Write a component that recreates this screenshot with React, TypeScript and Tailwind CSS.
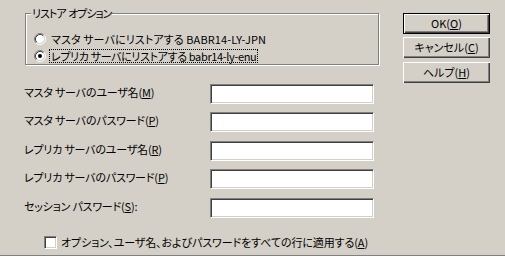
import type { ReactNode } from "react";

const sunken =
  "border border-t-[#808080] border-l-[#808080] border-r-white border-b-white shadow-[inset_1px_1px_0_#404040,inset_-1px_-1px_0_#d4d0c8] bg-white";

function Radio({ checked }: { checked?: boolean }) {
  return (
    <svg width="12" height="12" viewBox="0 0 12 12" className="shrink-0">
      <circle cx="6" cy="6" r="4.5" fill="#fff" />
      <path d="M2.11 9.89A5.5 5.5 0 0 1 9.89 2.11" stroke="#808080" fill="none" />
      <path d="M9.89 2.11A5.5 5.5 0 0 1 2.11 9.89" stroke="#fff" fill="none" />
      <path d="M2.82 9.18A4.5 4.5 0 0 1 9.18 2.82" stroke="#404040" fill="none" />
      <path d="M9.18 2.82A4.5 4.5 0 0 1 2.82 9.18" stroke="#d4d0c8" fill="none" />
      {checked && <circle cx="6" cy="6" r="2" fill="#000" />}
    </svg>
  );
}

function Btn({ children, primary }: { children: ReactNode; primary?: boolean }) {
  return (
    <button
      type="button"
      className={`flex h-[21px] w-[87px] items-center justify-center bg-[#d4d0c8] text-[11px] leading-none text-black ${
        primary
          ? "border border-black shadow-[inset_1px_1px_0_#fff,inset_-1px_-1px_0_#404040,inset_-2px_-2px_0_#808080]"
          : "shadow-[inset_1px_1px_0_#fff,inset_-1px_-1px_0_#404040,inset_-2px_-2px_0_#808080]"
      }`}
    >
      {children}
    </button>
  );
}

const fields = [
  { label: "マスタ サーバのユーザ名(", key: "M", tail: ")", mt: "mt-[19px]" },
  { label: "マスタ サーバのパスワード(", key: "P", tail: ")", mt: "mt-[8px]" },
  { label: "レプリカ サーバのユーザ名(", key: "R", tail: ")", mt: "mt-[9px]" },
  { label: "レプリカ サーバのパスワード(", key: "P", tail: ")", mt: "mt-[8px]" },
  { label: "セッション パスワード(", key: "S", tail: "):", mt: "mt-[9px]" },
];

export default function App() {
  return (
    <div className="flex h-[262px] w-[505px] flex-col bg-[#d4d0c8] font-['Noto_Sans_CJK_JP',sans-serif] text-[11px] text-black [font-feature-settings:'palt']">
      <div className="flex flex-1 pt-[13px]">
        <div className="flex w-[379px] flex-col pl-[24px]">
          <div className="relative ml-px h-[52px] w-[354px] border border-[#808080] shadow-[inset_1px_1px_0_#fff,1px_1px_0_#fff]">
            <span className="absolute -top-[9px] left-[5px] whitespace-nowrap bg-[#d4d0c8] px-[1px] leading-[16px] tracking-[-1px]">
              リストア<span className="tracking-normal"> </span>オプション
            </span>
            <div className="flex flex-col pl-[8px] pt-[16px]">
              <div className="flex h-[17px] items-center gap-[4px]">
                <Radio />
                <span className="whitespace-nowrap px-px leading-[14px] tracking-[0.1px]">
                  マスタ サーバにリストアする BABR14-LY-JPN
                </span>
              </div>
              <div className="flex h-[17px] items-center gap-[3px]">
                <Radio checked />
                <span className="whitespace-nowrap border border-dotted border-black px-px leading-[12px] tracking-[-0.35px]">
                  レプリカ サーバにリストアする babr14-ly-enu
                </span>
              </div>
            </div>
          </div>

          {fields.map((f, i) => (
            <div key={i} className={`flex h-[20px] items-start ${f.mt}`}>
              <span className="w-[186px] whitespace-nowrap pt-[1px] leading-[14px] tracking-[-0.2px]">
                {f.label}
                <u>{f.key}</u>
                {f.tail}
              </span>
              <div className={`h-[20px] w-[164px] ${sunken}`} />
            </div>
          ))}

          <div className="mt-[17px] flex items-center gap-[4px] pl-[20px]">
            <div className={`h-[13px] w-[13px] ${sunken}`} />
            <span className="whitespace-nowrap leading-[14px] tracking-[-0.1px]">
              オプション、ユーザ名、およびパスワードをすべての行に適用する(<u>A</u>)
            </span>
          </div>
        </div>

        <div className="ml-[24px] flex flex-col gap-[3px]">
          <Btn primary>
            OK(<u>O</u>)
          </Btn>
          <Btn>
            キャンセル(<u>C</u>)
          </Btn>
          <div className="mt-px">
            <Btn>
              ヘルプ(<u>H</u>)
            </Btn>
          </div>
        </div>
      </div>
      <div className="h-px bg-[#808080]" />
      <div className="h-[6px] bg-white" />
    </div>
  );
}
